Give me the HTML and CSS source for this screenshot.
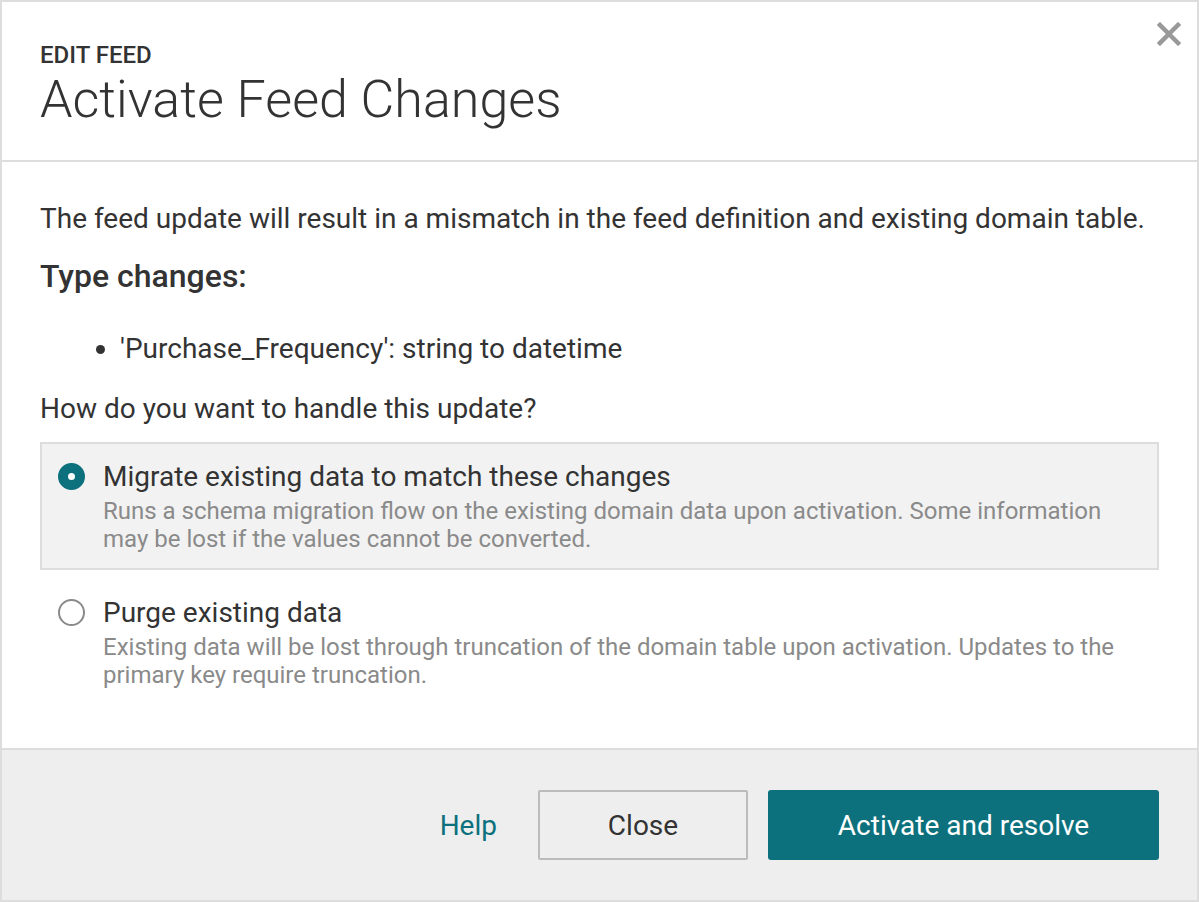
FILE: index.html
```html
<!DOCTYPE html>
<html>
<head>
<meta charset="utf-8">
<link rel="stylesheet" href="styles.css">
</head>
<body>
<div class="modal">
  <header class="modal-header">
    <div class="eyebrow">EDIT FEED</div>
    <h1 class="title">Activate Feed Changes</h1>
    <button class="close-x" aria-label="Close">
      <svg width="24" height="24" viewBox="0 0 24 24"><path d="M3 3 L21 21 M21 3 L3 21" stroke="#999" stroke-width="4.5" stroke-linecap="square" fill="none"/></svg>
    </button>
  </header>
  <main class="modal-body">
    <p class="intro">The feed update will result in a mismatch in the feed definition and existing domain table.</p>
    <h2 class="subhead">Type changes:</h2>
    <ul class="changes">
      <li>'Purchase_Frequency': string to datetime</li>
    </ul>
    <p class="question">How do you want to handle this update?</p>
    <div class="option selected">
      <span class="radio checked"></span>
      <div class="option-text">
        <div class="option-label">Migrate existing data to match these changes</div>
        <div class="option-desc">Runs a schema migration flow on the existing domain data upon activation. Some information may be lost if the values cannot be converted.</div>
      </div>
    </div>
    <div class="option">
      <span class="radio"></span>
      <div class="option-text">
        <div class="option-label">Purge existing data</div>
        <div class="option-desc">Existing data will be lost through truncation of the domain table upon activation. Updates to the primary key require truncation.</div>
      </div>
    </div>
  </main>
  <footer class="modal-footer">
    <a class="help" href="#">Help</a>
    <button class="btn btn-secondary">Close</button>
    <button class="btn btn-primary">Activate and resolve</button>
  </footer>
</div>
</body>
</html>
```

FILE: styles.css
```css
* { box-sizing: border-box; }
html, body { margin: 0; padding: 0; background: #fff; }
body { font-family: Roboto, "Liberation Sans", sans-serif; color: #333; }

.modal {
  width: 1199px;
  height: 902px;
  border: 2px solid #ddd;
  display: flex;
  flex-direction: column;
  background: #fff;
}

.modal-header {
  position: relative;
  flex: none;
  height: 160px;
  padding: 39px 38px 0 38px;
  border-bottom: 2px solid #ddd;
}
.eyebrow {
  font-size: 24px;
  line-height: 28px;
  font-weight: 500;
  color: #333;
}
.title {
  margin: 0;
  font-size: 52px;
  line-height: 62px;
  font-weight: 300;
  color: #333;
}
.close-x {
  position: absolute;
  top: 20px;
  right: 16px;
  border: 0;
  background: none;
  padding: 0;
  width: 24px;
  height: 24px;
}

.modal-body {
  flex: 1;
  padding: 40px 38px 0 38px;
}
.intro {
  margin: 0;
  font-size: 28px;
  line-height: 34px;
}
.subhead {
  margin: 21px 0 0;
  font-size: 32px;
  line-height: 38px;
  font-weight: 500;
}
.changes {
  margin: 37px 0 0;
  padding-left: 80px;
  font-size: 28px;
  line-height: 34px;
}
.question {
  margin: 26px 0 0;
  font-size: 28px;
  line-height: 34px;
}

.option {
  display: flex;
  gap: 18px;
  padding: 16px 20px 15px 16px;
  border: 2px solid transparent;
}
.option.selected {
  background: #f2f2f2;
  border-color: #ddd;
  margin-top: 16px;
}
.option + .option { margin-top: 8px; }
.radio {
  flex: none;
  width: 27px;
  height: 27px;
  border-radius: 50%;
  border: 2px solid #8a8a8a;
  background: #fff;
  margin-top: 3px;
}
.radio.checked {
  border: 10px solid #0c717d;
  background: #fff;
}
.option-label {
  font-size: 28px;
  line-height: 34px;
  color: #333;
}
.option-desc {
  margin-top: 3px;
  font-size: 24px;
  line-height: 28px;
  color: #8a8a8a;
}

.modal-footer {
  flex: none;
  height: 152px;
  background: #eee;
  border-top: 2px solid #ddd;
  display: flex;
  align-items: center;
  justify-content: flex-end;
  padding-right: 38px;
}
.help {
  font-size: 28px;
  color: #0c717d;
  text-decoration: none;
  margin-right: 41px;
}
.btn {
  height: 70px;
  font-family: Roboto, "Liberation Sans", sans-serif;
  font-size: 28px;
  border-radius: 3px;
  cursor: pointer;
}
.btn-secondary {
  width: 210px;
  background: #eee;
  border: 2px solid #bbb;
  color: #333;
  border-radius: 2px;
}
.btn-primary {
  width: 391px;
  margin-left: 20px;
  background: #0c717d;
  border: 0;
  color: #fff;
}
```
